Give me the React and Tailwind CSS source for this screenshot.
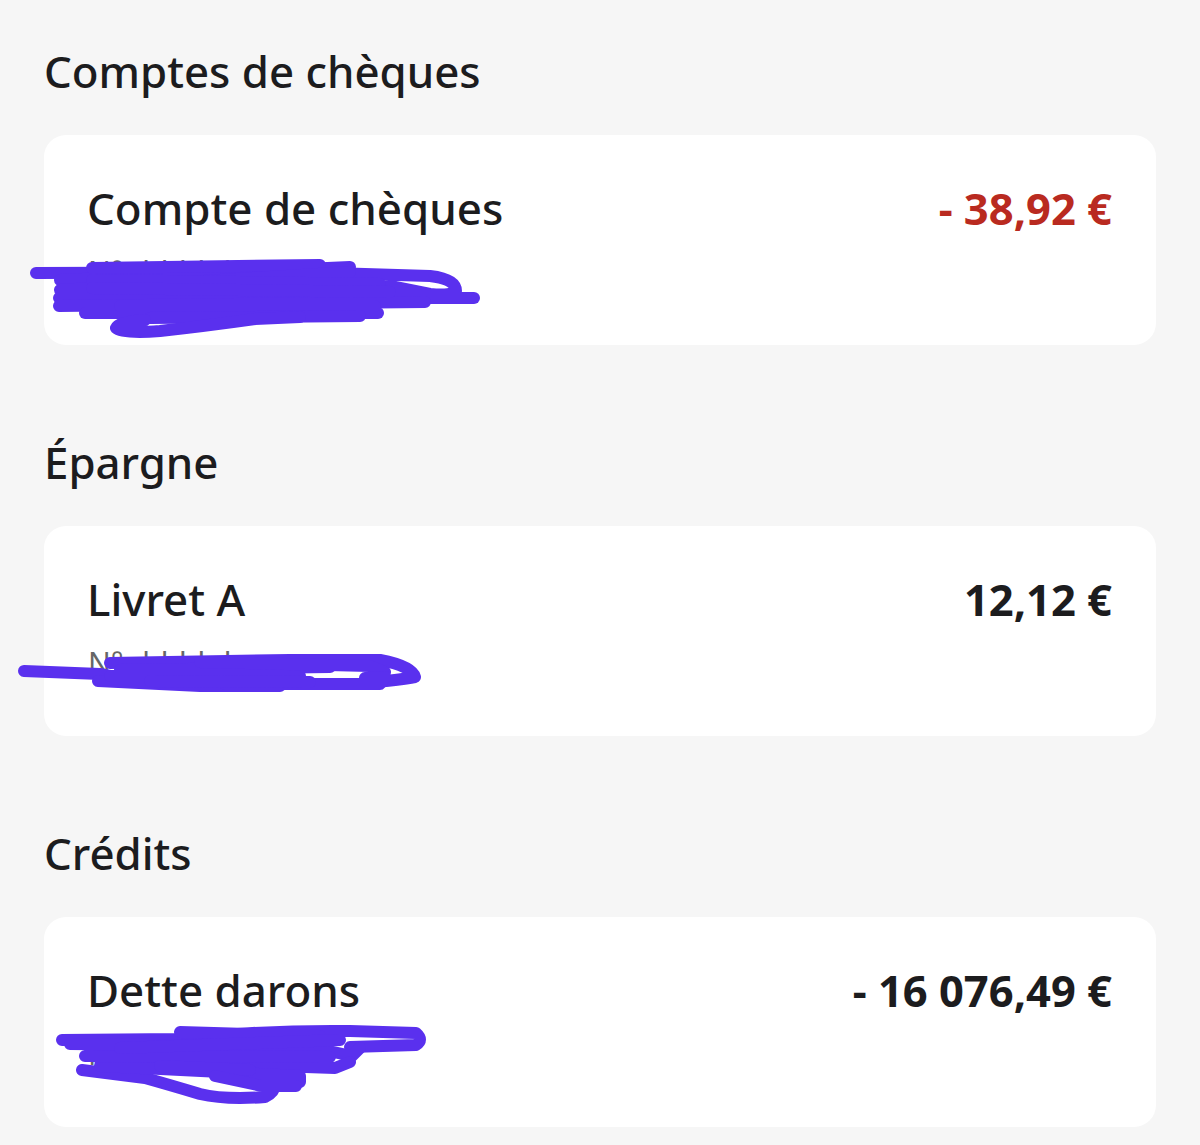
const fontStyle = "font-['Noto_Sans','Open_Sans',sans-serif]";

const scribbles = {
  first: [
    'M36 273 L300 272 L430 276 Q456 279 456 291 Q452 296 430 294 L385 285',
    'M60 280 L350 267',
    'M92 268 L320 265',
    'M60 290 L350 272',
    'M59 298 L474 298',
    'M59 306 L425 302',
    'M85 313 L378 313',
    'M92 280 L380 284',
    'M92 288 L390 292',
    'M120 306 L375 306',
    'M150 318 L360 316',
    'M145 320 Q118 322 116 328 Q122 334 160 331 Q205 326 255 319 L300 317',
  ],
  second: [
    'M24 671 L100 674 L130 680',
    'M110 663 L290 660 L380 660 Q412 666 415 677 Q400 680 365 683',
    'M98 681 L200 686 L280 686',
    'M120 670 L330 667',
    'M110 676 L300 676',
    'M200 662 L370 666 L385 672',
    'M225 684 L380 684 L385 677 L365 678',
    'M150 681 L310 682',
  ],
  third: [
    'M62 1040 L180 1039 Q260 1030 350 1031 L416 1033 Q424 1040 416 1045 L350 1047',
    'M90 1052 L260 1057',
    'M82 1070 L145 1078 Q170 1085 200 1094 Q225 1100 265 1097 Q276 1092 274 1083',
    'M70 1044 L310 1047 L352 1056 L360 1048',
    'M100 1060 L335 1068 L350 1062',
    'M100 1066 L300 1076 L300 1082',
    'M180 1032 L320 1036',
    'M85 1056 L330 1057',
    'M120 1048 L340 1040',
    'M160 1066 L250 1070',
    'M215 1076 L262 1086 L296 1086',
  ],
};

const Scribble = ({ lines, viewBox, className }) => (
  <svg viewBox={viewBox} className={className} fill="none" stroke="#5a30ee" strokeWidth="12" strokeLinecap="round" strokeLinejoin="round">
    {lines.map((d) => (
      <path key={d} d={d} />
    ))}
  </svg>
);

const sections = [
  {
    title: 'Comptes de chèques',
    name: 'Compte de chèques',
    amount: '- 38,92 €',
    amountClass: 'text-[#b92a20]',
    lines: scribbles.first,
    viewBox: '0 135 1112 210',
  },
  {
    title: 'Épargne',
    name: 'Livret A',
    amount: '12,12 €',
    amountClass: 'text-[#1c1c1e]',
    lines: scribbles.second,
    viewBox: '0 526 1112 210',
  },
  {
    title: 'Crédits',
    name: 'Dette darons',
    amount: '- 16 076,49 €',
    amountClass: 'text-[#1c1c1e]',
    lines: scribbles.third,
    viewBox: '0 917 1112 210',
  },
];

export default function App() {
  return (
    <div className={`${fontStyle} h-[1145px] overflow-hidden bg-[#f6f6f6] pl-[44px] pr-[44px] pt-[40px] text-[#1c1c1e]`}>
      <div className="flex flex-col gap-[86px]">
        {sections.map((section) => (
          <section key={section.title}>
            <h2 className="text-[43.8px] font-medium leading-[63px]">{section.title}</h2>
            <div className="relative mt-[32px] h-[210px] rounded-[22px] bg-white pl-[44px] pr-[44px] pt-[42px]">
              <div className="-ml-px flex items-start justify-between text-[43.9px] font-medium leading-[63px]">
                <span>{section.name}</span>
                <span className={`text-[43.5px] font-bold ${section.amountClass}`}>{section.amount}</span>
              </div>
              <p className="mt-[12px] text-[30px] leading-[40px] text-[#666]">N° dddd d</p>
              <Scribble
                lines={section.lines}
                viewBox={section.viewBox}
                className="absolute left-[-44px] top-0 h-[210px] w-[1112px] overflow-visible"
              />
            </div>
          </section>
        ))}
      </div>
    </div>
  );
}
